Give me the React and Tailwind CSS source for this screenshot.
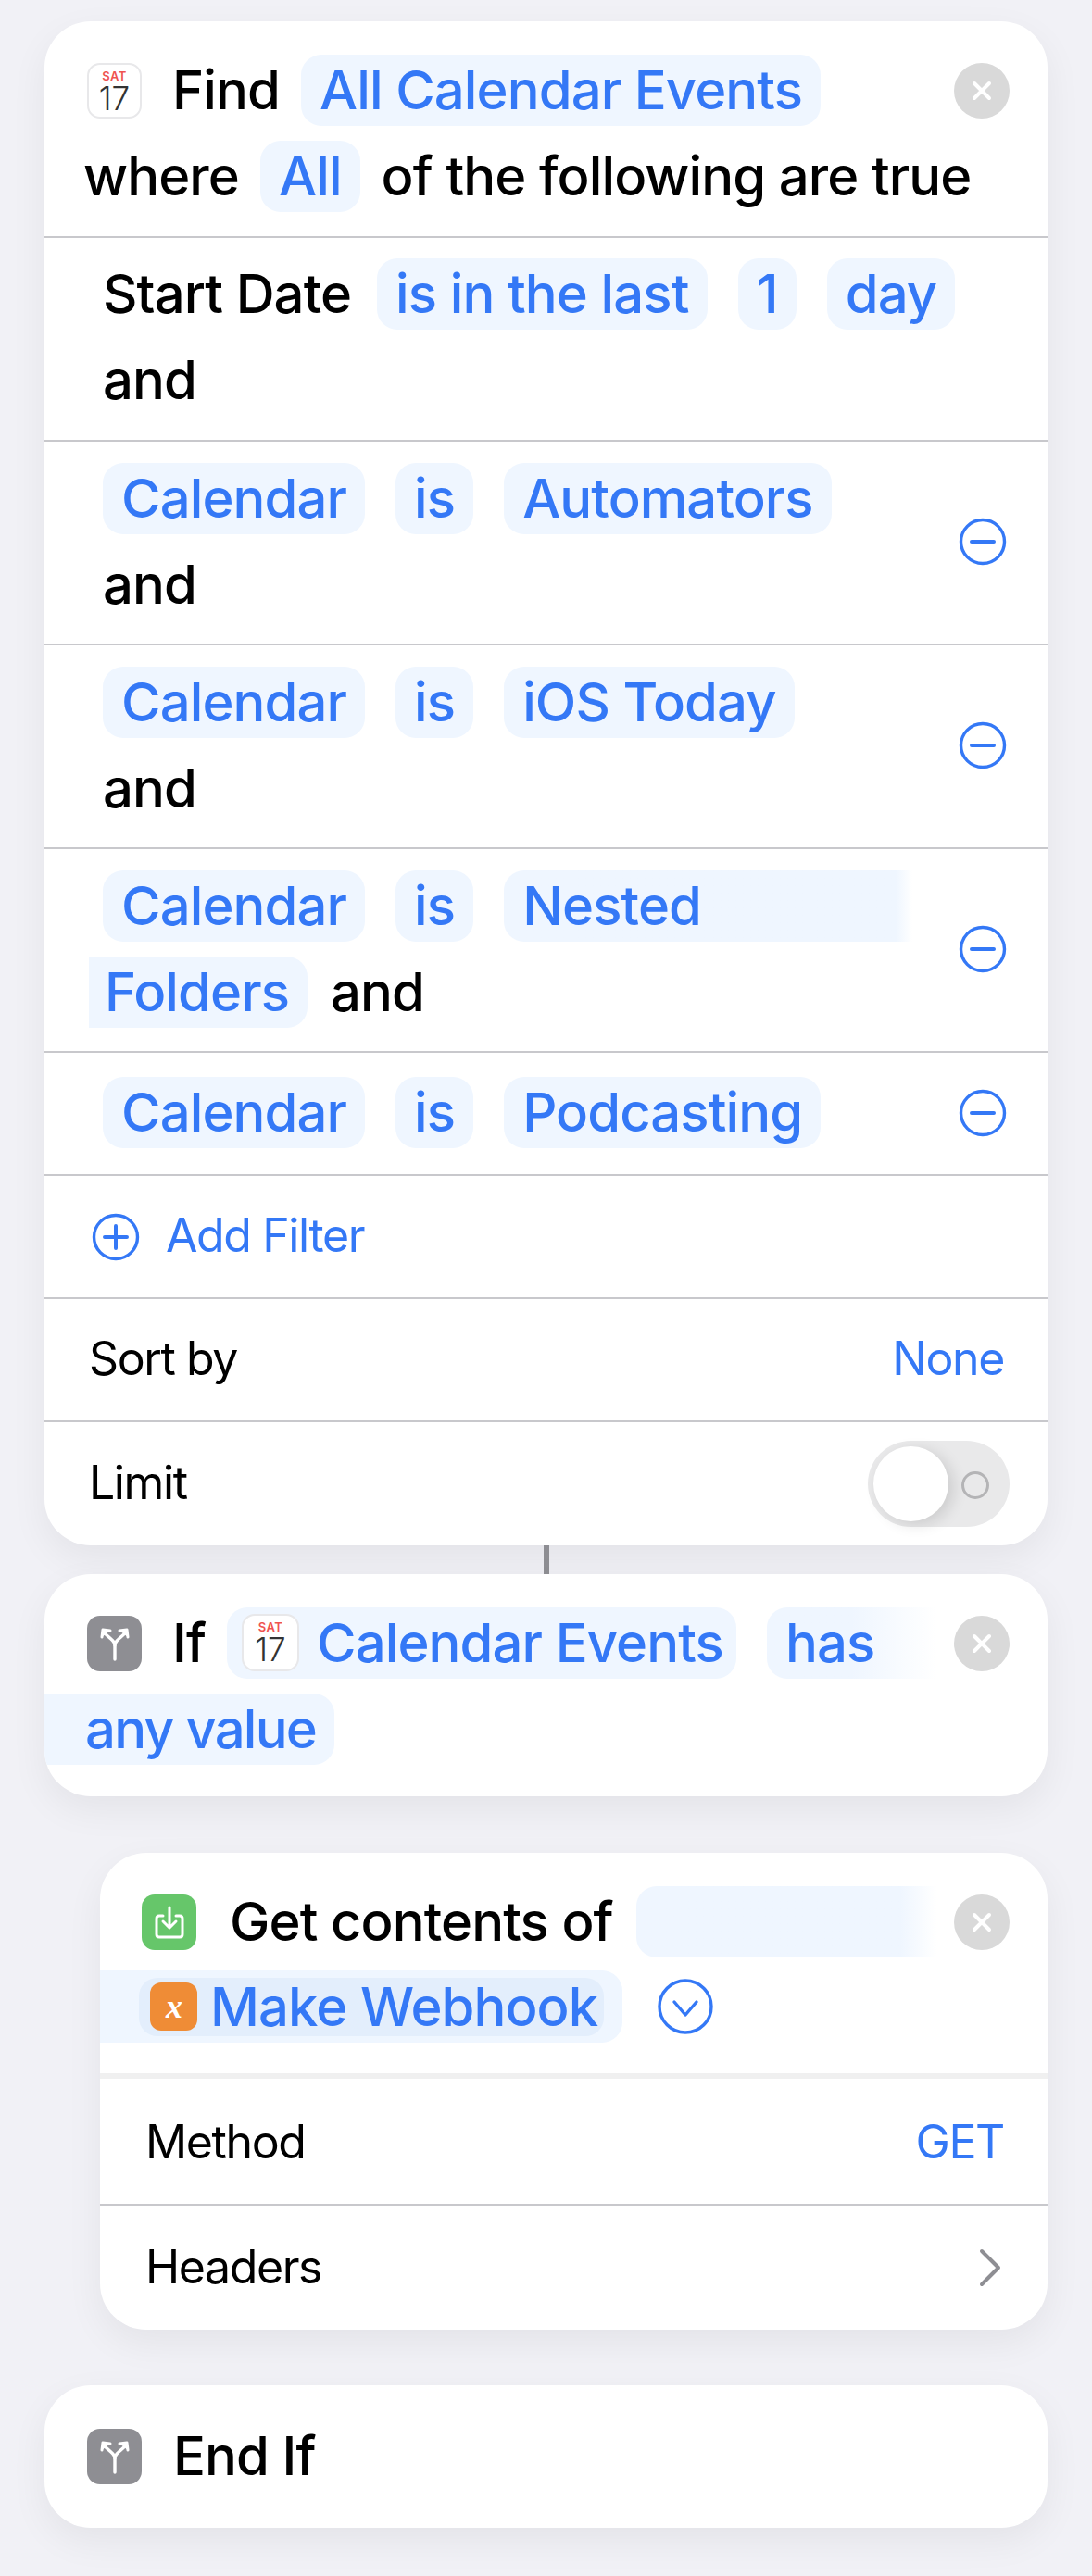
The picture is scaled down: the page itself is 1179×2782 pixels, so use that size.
import React from 'react'

const Calendar = ({ large }) => (
    <div className={`flex flex-col items-center shrink-0 bg-white border-2 border-[#e8e8ea] rounded-[14px] ${large ? 'w-[62px] h-[62px]' : 'w-[59px] h-[60px]'}`}>
        <span className="mt-[5px] text-[13px] leading-[15px] font-semibold tracking-[0.5px] text-[#ef5350]">SAT</span>
        <span className="text-[35px] leading-[33px] font-light tracking-normal text-[#333]">17</span>
    </div>
)

const Branch = () => (
    <div className="flex items-center justify-center w-[59px] h-[60px] shrink-0 rounded-[14px] bg-[#8e8e93]">
        <svg width="34" height="38" viewBox="0 0 34 38" fill="none" stroke="white" strokeWidth="3.4" strokeLinecap="round" strokeLinejoin="round">
            <path d="M17 36V21C17 17 14 15 6 8" />
            <path d="M17 21C17 17 20 15 28 8" />
            <path d="M3 12L4 4L12 5" strokeWidth="3" fill="white" />
            <path d="M31 12L30 4L22 5" strokeWidth="3" fill="white" />
        </svg>
    </div>
)

const Close = () => (
    <div className="flex items-center justify-center w-[60px] h-[60px] ml-auto shrink-0 rounded-full bg-[#d9d9d9]">
        <svg width="24" height="24" viewBox="0 0 24 24" fill="none" stroke="white" strokeWidth="4" strokeLinecap="round">
            <path d="M4 4L20 20M20 4L4 20" />
        </svg>
    </div>
)

const Minus = () => (
    <svg width="52" height="52" viewBox="0 0 52 52" fill="none" stroke="#3478f6" strokeWidth="3.4" strokeLinecap="round" className="shrink-0">
        <circle cx="26" cy="26" r="23.5" />
        <path d="M14 26H38" strokeWidth="4" />
    </svg>
)

const Pill = ({ children, className = 'rounded-[22px] px-[20px]' }) => (
    <span className={`flex items-center h-[77px] shrink-0 bg-[#eff6ff] text-[#3478f6] whitespace-nowrap ${className}`}>{children}</span>
)

// every direct span sits a little high, the font's box is lower than the reference
const Line = ({ children, gap = 'gap-[33px]', className = '' }) => (
    <div className={`flex items-center h-[77px] ${gap} whitespace-nowrap [&>span]:pb-[2px] ${className}`}>{children}</div>
)

const Cond = ({ value }) => (
    <Line>
        <Pill>Calendar</Pill>
        <Pill>is</Pill>
        <Pill>{value}</Pill>
    </Line>
)

const SmallRow = ({ label, children, className = '' }) => (
    <div className={`flex items-center justify-between text-[50px] font-normal tracking-[-1.4px] border-t-2 border-[#c8c8cc] ${className}`}>
        <span className="pb-[3px]">{label}</span>
        {children}
    </div>
)

export default function App() {
    return (
        <div className="min-h-[2782px] bg-[#f1f1f6] px-[48px] pt-[23px] pb-[52px] font-['Inter',sans-serif] font-[450] text-[58px] leading-none tracking-[-0.9px] text-black">
            {/* Find block */}
            <div className="rounded-[50px] bg-white shadow-[0_14px_40px_rgba(0,0,0,0.06)] overflow-hidden">
                <div className="h-[232px] pt-[36px] pl-[46px] pr-[41px]">
                    <Line>
                        <Calendar />
                        <span className="-mr-[10px]">Find</span>
                        <Pill>All Calendar Events</Pill>
                        <Close />
                    </Line>
                    <Line gap="gap-[23px]" className="mt-[16px] -ml-[4px]">
                        <span>where</span>
                        <Pill>All</Pill>
                        <span>of the following are true</span>
                    </Line>
                </div>

                <div className="h-[220px] pt-[22px] pl-[63px] border-t-2 border-[#c8c8cc]">
                    <Line>
                        <span className="-mr-[5px]">Start Date</span>
                        <Pill>is in the last</Pill>
                        <Pill>1</Pill>
                        <Pill>day</Pill>
                    </Line>
                    <Line className="mt-[16px]"><span>and</span></Line>
                </div>

                {['Automators', 'iOS Today'].map(name => (
                    <div key={name} className="flex items-center justify-between h-[220px] pb-[2px] pl-[63px] pr-[44px] border-t-2 border-[#c8c8cc]">
                        <div>
                            <Cond value={name} />
                            <Line className="mt-[16px]"><span>and</span></Line>
                        </div>
                        <Minus />
                    </div>
                ))}

                <div className="flex items-center justify-between h-[220px] pb-[2px] pl-[63px] pr-[44px] border-t-2 border-[#c8c8cc]">
                    <div>
                        <Line>
                            <Pill>Calendar</Pill>
                            <Pill>is</Pill>
                            <Pill className="w-[441px] rounded-l-[22px] px-[20px] bg-linear-to-r from-[#eff6ff] from-[96%] to-white">Nested</Pill>
                        </Line>
                        <Line gap="gap-[25px]" className="mt-[16px] -ml-[15px]">
                            <Pill className="rounded-r-[22px] pl-[17px] pr-[20px]">Folders</Pill>
                            <span>and</span>
                        </Line>
                    </div>
                    <Minus />
                </div>

                <div className="flex items-center justify-between h-[133px] pb-[2px] pl-[63px] pr-[44px] border-t-2 border-[#c8c8cc]">
                    <Cond value="Podcasting" />
                    <Minus />
                </div>

                <div className="flex items-center gap-[28px] h-[133px] pl-[51px] text-[50px] font-normal tracking-[-1.4px] text-[#3478f6] border-t-2 border-[#c8c8cc]">
                    <svg width="52" height="52" viewBox="0 0 52 52" fill="none" stroke="#3478f6" strokeWidth="3.4" strokeLinecap="round">
                        <circle cx="26" cy="26" r="23.5" />
                        <path d="M14 26H38M26 14V38" strokeWidth="4" />
                    </svg>
                    <span className="pb-[3px]">Add Filter</span>
                </div>

                <SmallRow label="Sort by" className="h-[133px] pl-[48px] pr-[47px]">
                    <span className="pb-[3px] text-[#3478f6]">None</span>
                </SmallRow>

                <SmallRow label="Limit" className="h-[135px] pl-[48px] pr-[41px]">
                    <div className="relative w-[153px] h-[93px] rounded-full bg-[#e9e9ea]">
                        <div className="absolute left-[6px] top-[6px] w-[81px] h-[81px] rounded-full bg-white shadow-[6px_4px_16px_rgba(0,0,0,0.12)]" />
                        <div className="absolute left-[101px] top-[33px] w-[30px] h-[30px] rounded-full border-[3px] border-[#b4b4b6]" />
                    </div>
                </SmallRow>
            </div>

            <div className="w-[6px] h-[31px] ml-[539px] bg-[#8e8e93]" />

            {/* If block */}
            <div className="h-[240px] pt-[36px] rounded-[50px] bg-white shadow-[0_14px_40px_rgba(0,0,0,0.06)] overflow-hidden">
                <Line className="pl-[46px] pr-[41px]">
                    <Branch />
                    <span className="-mr-[10px]">If</span>
                    <Pill className="rounded-[22px] pl-[16px] pr-[14px] gap-[19px]">
                        <Calendar large />
                        Calendar Events
                    </Pill>
                    <Pill className="w-[183px] -mr-[30px] rounded-l-[22px] px-[20px] bg-linear-to-r from-[#eff6ff] from-[50%] to-white">has</Pill>
                    <Close />
                </Line>
                <Line className="mt-[16px]">
                    <Pill className="rounded-r-[22px] pl-[44px] pr-[20px] tracking-[-1.8px]">any value</Pill>
                </Line>
            </div>

            {/* Get contents block */}
            <div className="ml-[60px] mt-[61px] rounded-[50px] bg-white shadow-[0_14px_40px_rgba(0,0,0,0.06)] overflow-hidden">
                <div className="h-[238px] pt-[36px] pr-[41px]">
                    <Line gap="gap-[25px]" className="pl-[45px]">
                        <div className="flex items-center justify-center w-[59px] h-[60px] mr-[11px] shrink-0 rounded-[14px] bg-[#66c66a]">
                            <svg width="32" height="36" viewBox="0 0 32 36" fill="none" stroke="white" strokeWidth="3" strokeLinecap="round" strokeLinejoin="round">
                                <path d="M9 11H5C3 11 2 12 2 14V31C2 33 3 34 5 34H27C29 34 30 33 30 31V14C30 12 29 11 27 11H23" />
                                <path d="M16 2V23M9 17L16 24L23 17" />
                            </svg>
                        </div>
                        <span>Get contents of</span>
                        <Pill className="w-[324px] -mr-[30px] rounded-l-[22px] bg-linear-to-r from-[#eff6ff] from-[88%] to-white" />
                        <Close />
                    </Line>
                    <div className="flex items-center h-[78px] mt-[14px] gap-[38px]">
                        <div className="flex items-center w-[564px] h-[78px] pl-[42px] rounded-r-[22px] bg-[#eff6ff]">
                            <div className="flex items-center gap-[14px] w-[502px] h-[63px] pl-[12px] rounded-[20px] bg-[#e3eefc] text-[#3478f6] whitespace-nowrap">
                                <div className="flex items-center justify-center w-[51px] h-[52px] rounded-[12px] bg-[#ef8c36] font-['Liberation_Serif',serif] italic font-bold text-[36px] text-white">x</div>
                                <span>Make Webhook</span>
                            </div>
                        </div>
                        <svg width="60" height="60" viewBox="0 0 60 60" fill="none" stroke="#3478f6" strokeWidth="3.4" strokeLinecap="round" strokeLinejoin="round">
                            <circle cx="30" cy="30" r="28" />
                            <path d="M18 25L30 39L42 25" />
                        </svg>
                    </div>
                </div>
                <div className="flex items-center justify-between h-[141px] pl-[49px] pr-[47px] text-[50px] font-normal tracking-[-1.4px] border-t-[6px] border-[#f0f0f0]">
                    <span>Method</span>
                    <span className="text-[#3478f6]">GET</span>
                </div>
                <SmallRow label="Headers" className="h-[136px] pl-[49px] pr-[50px]">
                    <svg width="24" height="42" viewBox="0 0 24 42" fill="none" stroke="#8e8e93" strokeWidth="4" strokeLinecap="round" strokeLinejoin="round">
                        <path d="M3 3L21 21L3 39" />
                    </svg>
                </SmallRow>
            </div>

            {/* End If block */}
            <div className="flex items-center gap-[34px] h-[154px] mt-[60px] pl-[46px] rounded-[50px] bg-white shadow-[0_14px_40px_rgba(0,0,0,0.06)]">
                <Branch />
                <span className="pb-[3px]">End If</span>
            </div>
        </div>
    )
}
